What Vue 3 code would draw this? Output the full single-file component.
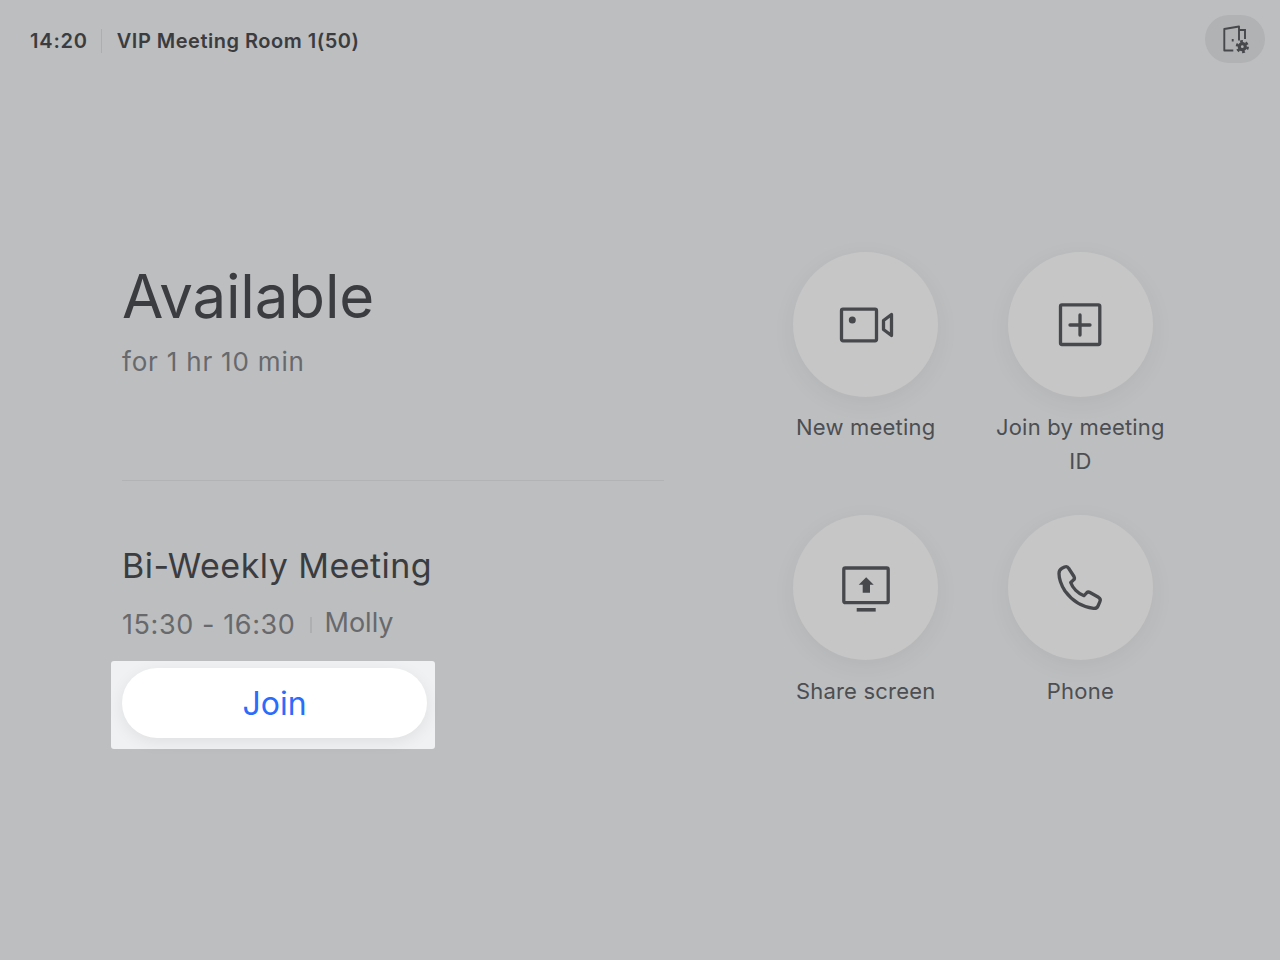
<template>
  <div class="page">

    <!-- HEADER -->
    <div class="header">
      <div class="room">
        <span class="clock">14:20</span>
        <span class="room-sep"></span>
        <span class="room-name">VIP Meeting Room 1(50)</span>
      </div>
      <button class="settings">
        <svg width="30" height="30" viewBox="0 0 30 30" fill="none" stroke="#46484c" stroke-width="1.9">
          <path d="M13.3 26.500H4.300V5L19 2.500V16.500" stroke-linejoin="round" />
          <path d="M19 6H25V15" />
          <path d="M12.700 15v2.500" />
          <circle cx="22.300" cy="22.700" r="3" stroke-width="3.200" />
          <circle cx="22.300" cy="22.700" r="5.400" stroke-width="2.400" stroke-dasharray="2.800 2.850" />
        </svg>
      </button>
    </div>

    <div class="main">

      <!-- LEFT -->
      <div class="left">
        <h1 class="title">Available</h1>
        <div class="duration">for 1 hr 10 min</div>
        <div class="divider"></div>
        <h2 class="meeting">Bi-Weekly Meeting</h2>
        <div class="meeting-meta">
          <span class="time">15:30 - 16:30</span>
          <span class="meta-sep"></span>
          <span class="host">Molly</span>
        </div>
        <div class="spotlight">
          <button class="join">Join</button>
        </div>
      </div>

      <!-- ACTIONS -->
      <div class="actions">
        <div v-for="action in actions" :key="action.label" class="action">
          <div class="circle">
            <svg width="60" height="60" viewBox="0 0 60 60" fill="none" stroke="#46484c" stroke-width="3.300" stroke-linejoin="round" stroke-linecap="round">
              <g v-if="action.icon === 'video'">
                <rect x="5.500" y="14.200" width="35" height="31.600" rx="1.500" />
                <circle cx="16.300" cy="25" r="3.500" fill="#46484c" stroke="none" />
                <path d="M47.500 25.500l8-6V40.500l-8-6z" />
              </g>
              <g v-else-if="action.icon === 'plus'">
                <rect x="10.500" y="9.800" width="39.300" height="39.700" rx="1.500" />
                <path d="M30 20v20M20 30h20" />
              </g>
              <g v-else-if="action.icon === 'share'">
                <rect x="7.800" y="10" width="44.400" height="34.700" rx="1.500" />
                <path d="M30.200 19.200l7.500 7.600H34v8h-7.300v-8h-4z" fill="#46484c" stroke="none" />
                <path d="M20.700 51.800h19" stroke-width="3.600" stroke-linecap="butt" />
              </g>
              <g v-else>
                <path d="M9 15.500C9 12.500 10.500 11 12 10.200L14.500 9C16.500 8.200 18 9 18.800 10.500L24 18.500C24.800 20 24.500 21.300 23.200 22.200L20.700 24.500C22.500 30 28 35.500 34 37.700L36.500 35C37.500 34 38.800 33.800 40 34.500L48.500 39.300C50 40.300 50.700 41.800 50 43.300L48 48C47.200 50 45.500 50.500 43.500 50.300C32 49 22 42.500 15 33C11.500 27.500 9 21.500 9 15.500z" />
              </g>
            </svg>
          </div>
          <div class="label">{{ action.label }}</div>
        </div>
      </div>

    </div>
  </div>
</template>

<script setup>
const actions = [
  { label: 'New meeting', icon: 'video' },
  { label: 'Join by meeting ID', icon: 'plus' },
  { label: 'Share screen', icon: 'share' },
  { label: 'Phone', icon: 'phone' }
]
</script>

<style>
html,
body {
  margin: 0;
  background: #bdbec0;
}
</style>

<style scoped>
.page {
  height: 960px;
  width: 1280px;
  overflow: hidden;
  background: #bdbec0;
  font-family: Inter, "Liberation Sans", sans-serif;
  color: #3a3c40;
}

/* HEADER */
.header {
  display: flex;
  justify-content: space-between;
  align-items: center;
  height: 80px;
  padding: 0 15px 0 30px;
}

.room {
  display: flex;
  align-items: center;
  margin-top: 1px;
  font-size: 20px;
  font-weight: 600;
}

.clock {
  letter-spacing: 0.8px;
}

.room-name {
  letter-spacing: 0.5px;
}

.room-sep {
  width: 1px;
  height: 24px;
  margin: 0 15px 0 13px;
  background: #adaeb0;
}

.settings {
  display: flex;
  align-items: center;
  justify-content: center;
  width: 60px;
  height: 48px;
  margin-top: -3px;
  padding: 0;
  border: none;
  border-radius: 24px;
  background: #b1b2b4;
}

.main {
  display: flex;
  padding: 172px 0 0 122px;
}

/* LEFT */
.left {
  width: 542px;
  flex-shrink: 0;
}

.title {
  margin: 1px 0 0;
  font-size: 60px;
  line-height: 86px;
  font-weight: 400;
  letter-spacing: -0.15px;
}

.duration {
  margin-top: 5px;
  font-size: 26px;
  line-height: 36px;
  letter-spacing: 0.8px;
  color: #67696d;
}

.divider {
  height: 1px;
  margin-top: 100px;
  background: #b2b3b5;
}

.meeting {
  margin: 61px 0 0;
  font-size: 34px;
  line-height: 48px;
  font-weight: 400;
  letter-spacing: 0.47px;
}

.meeting-meta {
  display: flex;
  align-items: center;
  height: 40px;
  margin-top: 15px;
  font-size: 27px;
  line-height: 40px;
  color: #67696d;
}

.time {
  letter-spacing: 0.6px;
}

.host {
  margin-bottom: 4px;
}

.meta-sep {
  width: 2px;
  height: 16px;
  margin: 0 13px 0 14px;
  background: #aeafb1;
}

.spotlight {
  box-sizing: border-box;
  display: inline-block;
  width: 324px;
  height: 88px;
  margin: 16px 0 0 -11px;
  padding: 7px 8px 11px 11px;
  border-radius: 3px;
  background: #f0f1f2;
}

.join {
  display: block;
  width: 305px;
  height: 70px;
  padding: 0;
  border: none;
  border-radius: 35px;
  background: #fff;
  box-shadow: 0 4px 16px rgba(0, 0, 0, 0.07);
  color: #2b6cfb;
  font-family: inherit;
  font-size: 32px;
}

/* ACTIONS */
.actions {
  display: grid;
  grid-template-columns: 190px 190px;
  column-gap: 24.7px;
  row-gap: 37px;
  align-content: start;
  margin-left: 106.7px;
}

.action {
  display: flex;
  flex-direction: column;
  align-items: center;
  text-align: center;
}

.circle {
  display: flex;
  align-items: center;
  justify-content: center;
  width: 145px;
  height: 145px;
  border-radius: 50%;
  background: #c6c6c6;
  box-shadow: 0 6px 24px rgba(0, 0, 0, 0.05);
}

.label {
  margin-top: 13px;
  min-height: 34px;
  font-size: 22px;
  line-height: 34px;
  letter-spacing: 0.2px;
  color: #4c4e52;
}

.action:nth-child(n + 3) .label {
  margin-top: 14px;
}
</style>
